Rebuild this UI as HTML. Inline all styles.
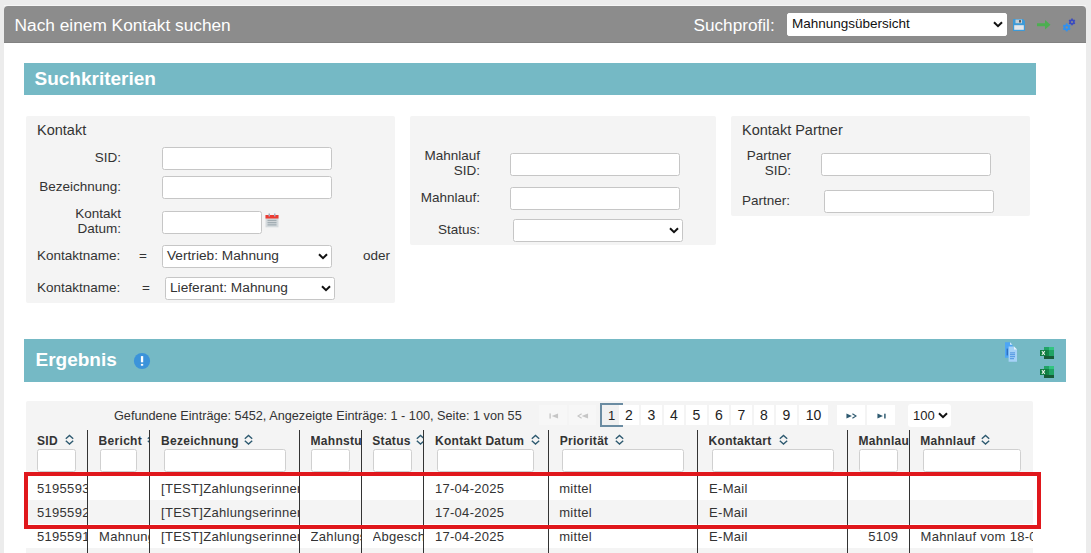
<!DOCTYPE html>
<html><head><meta charset="utf-8">
<style>
*{box-sizing:border-box;margin:0;padding:0}
html,body{width:1091px;height:553px;overflow:hidden;background:#ececec;font-family:"Liberation Sans",sans-serif;color:#333}
.a{position:absolute}
.t{position:absolute;white-space:nowrap;line-height:1}
#panel{left:4px;top:6px;width:1082px;height:560px;background:#fff;border-radius:4px 4px 0 0;overflow:hidden}
#hdr{left:0;top:0;width:1082px;height:37px;background:#8c8c8c;border-bottom:1px solid #828282}
.bar{background:#75b9c5}
.box{background:#f4f4f4;border-radius:2px}
.inp{position:absolute;background:#fff;border:1px solid #c6c6c6;border-radius:2.5px;height:23px}
.sel{position:absolute;background:#fff;border:1px solid #c6c6c6;border-radius:2.5px;height:23px}
.sel svg{position:absolute;right:3px;top:7px}
.lbl{position:absolute;white-space:nowrap;font-size:13.5px;line-height:15px;color:#333}
.r{text-align:right}
.th{position:absolute;white-space:nowrap;font-size:12px;font-weight:700;line-height:1;color:#333;letter-spacing:0.3px}
.cl{position:absolute;width:1px;background:#333}
.td{position:absolute;white-space:nowrap;font-size:13px;line-height:1;color:#333;letter-spacing:0.3px}
.pg{position:absolute;top:405px;height:20px;background:#fff;font-size:14px;line-height:20px;text-align:center;color:#222}
</style></head><body>
<div class="a" style="left:4px;top:5px;width:1082px;height:1px;background:#f6f6f6"></div>
<div id="panel" class="a">
  <div id="hdr" class="a"></div>
</div>
<!-- header text -->
<div class="t" style="left:14.6px;top:17px;font-size:17.3px;color:#fff">Nach einem Kontakt suchen</div>
<div class="t" style="left:693.5px;top:16.8px;font-size:17.2px;color:#fff">Suchprofil:</div>
<div class="sel" style="left:787px;top:13px;width:220px;height:22.5px;border-color:#fff;border-radius:2px">
  <div class="t" style="left:4px;top:3.4px;font-size:13.5px;color:#111">Mahnungsübersicht</div>
  <svg width="10" height="7" viewBox="0 0 10 7" style="top:7px;right:3px"><path d="M1 1.2 L5 5.2 L9 1.2" fill="none" stroke="#111" stroke-width="2"/></svg>
</div>

<!-- Suchkriterien -->
<div class="a bar" style="left:24px;top:63px;width:1012px;height:32px"></div>
<div class="t" style="left:34.5px;top:68.5px;font-size:19px;font-weight:700;color:#fff">Suchkriterien</div>

<!-- Kontakt box -->
<div class="a box" style="left:26px;top:116px;width:369px;height:187px"></div>
<div class="t" style="left:37px;top:123px;font-size:14.5px;color:#333">Kontakt</div>
<div class="lbl r" style="left:30px;top:150px;width:91px">SID:</div>
<div class="inp" style="left:162px;top:147px;width:170px"></div>
<div class="lbl r" style="left:30px;top:179px;width:91px">Bezeichnung:</div>
<div class="inp" style="left:162px;top:176px;width:170px"></div>
<div class="lbl r" style="left:30px;top:206px;width:91px">Kontakt<br>Datum:</div>
<div class="inp" style="left:162px;top:211px;width:100px"></div>

<div class="lbl" style="left:37px;top:248px">Kontaktname:</div>
<div class="lbl" style="left:139px;top:248px">=</div>
<div class="sel" style="left:162px;top:245px;width:170px;height:23px">
  <div class="t" style="left:4px;top:3.3px;font-size:13.7px">Vertrieb: Mahnung</div>
  <svg width="10" height="7" viewBox="0 0 10 7"><path d="M1 1.2 L5 5.2 L9 1.2" fill="none" stroke="#111" stroke-width="2"/></svg>
</div>
<div class="lbl" style="left:363px;top:248px">oder</div>
<div class="lbl" style="left:37px;top:280px">Kontaktname:</div>
<div class="lbl" style="left:142px;top:280px">=</div>
<div class="sel" style="left:165px;top:277px;width:170px;height:23px">
  <div class="t" style="left:4px;top:3.3px;font-size:13.7px">Lieferant: Mahnung</div>
  <svg width="10" height="7" viewBox="0 0 10 7"><path d="M1 1.2 L5 5.2 L9 1.2" fill="none" stroke="#111" stroke-width="2"/></svg>
</div>

<!-- Mahnlauf box -->
<div class="a box" style="left:410px;top:116px;width:306px;height:129px"></div>
<div class="lbl r" style="left:400px;top:148px;width:80px">Mahnlauf<br>SID:</div>
<div class="inp" style="left:510px;top:153px;width:170px"></div>
<div class="lbl r" style="left:400px;top:190px;width:80px">Mahnlauf:</div>
<div class="inp" style="left:510px;top:187px;width:170px"></div>
<div class="lbl r" style="left:400px;top:222px;width:80px">Status:</div>
<div class="sel" style="left:513px;top:219px;width:170px">
  <svg width="10" height="7" viewBox="0 0 10 7"><path d="M1 1.2 L5 5.2 L9 1.2" fill="none" stroke="#111" stroke-width="2"/></svg>
</div>

<!-- Partner box -->
<div class="a box" style="left:731px;top:116px;width:299px;height:100px"></div>
<div class="t" style="left:742px;top:123px;font-size:14.5px;color:#333">Kontakt Partner</div>
<div class="lbl r" style="left:700px;top:148px;width:91px">Partner<br>SID:</div>
<div class="inp" style="left:821px;top:153px;width:170px"></div>
<div class="lbl" style="left:742px;top:193px">Partner:</div>
<div class="inp" style="left:824px;top:190px;width:170px"></div>

<!-- Ergebnis -->
<div class="a bar" style="left:24px;top:339px;width:1042px;height:43px"></div>
<div class="t" style="left:35.5px;top:350.4px;font-size:19px;font-weight:700;color:#fff">Ergebnis</div>

<!-- table bg -->
<div class="a box" style="left:26px;top:401px;width:1007px;height:160px"></div>
<div class="t" style="left:114px;top:410px;font-size:12.7px;color:#333">Gefundene Einträge: 5452, Angezeigte Einträge: 1 - 100, Seite: 1 von 55</div>

<div class="a" style="left:37.0px;top:430px;width:50.0px;height:19px;overflow:hidden"><div class="th" style="left:0;top:5px">SID</div><svg class="a" style="left:28.4px;top:4.3px" width="9" height="11" viewBox="0 0 9 11"><path d="M0.8 4.7 L4.5 1.5 L8.2 4.7 M0.8 6.8 L4.5 10 L8.2 6.8" fill="none" stroke="#2e5a70" stroke-width="1.4"/></svg></div>
<div class="a" style="left:98.6px;top:430px;width:50.4px;height:19px;overflow:hidden"><div class="th" style="left:0;top:5px">Bericht</div><svg class="a" style="left:48.0px;top:4.3px" width="9" height="11" viewBox="0 0 9 11"><path d="M0.8 4.7 L4.5 1.5 L8.2 4.7 M0.8 6.8 L4.5 10 L8.2 6.8" fill="none" stroke="#2e5a70" stroke-width="1.4"/></svg></div>
<div class="a" style="left:161.0px;top:430px;width:138.0px;height:19px;overflow:hidden"><div class="th" style="left:0;top:5px">Bezeichnung</div><svg class="a" style="left:82.9px;top:4.3px" width="9" height="11" viewBox="0 0 9 11"><path d="M0.8 4.7 L4.5 1.5 L8.2 4.7 M0.8 6.8 L4.5 10 L8.2 6.8" fill="none" stroke="#2e5a70" stroke-width="1.4"/></svg></div>
<div class="a" style="left:310.5px;top:430px;width:50.5px;height:19px;overflow:hidden"><div class="th" style="left:0;top:5px">Mahnstufe</div></div>
<div class="a" style="left:372.3px;top:430px;width:50.7px;height:19px;overflow:hidden"><div class="th" style="left:0;top:5px">Status</div><svg class="a" style="left:44.1px;top:4.3px" width="9" height="11" viewBox="0 0 9 11"><path d="M0.8 4.7 L4.5 1.5 L8.2 4.7 M0.8 6.8 L4.5 10 L8.2 6.8" fill="none" stroke="#2e5a70" stroke-width="1.4"/></svg></div>
<div class="a" style="left:435.0px;top:430px;width:113.0px;height:19px;overflow:hidden"><div class="th" style="left:0;top:5px">Kontakt Datum</div><svg class="a" style="left:96.4px;top:4.3px" width="9" height="11" viewBox="0 0 9 11"><path d="M0.8 4.7 L4.5 1.5 L8.2 4.7 M0.8 6.8 L4.5 10 L8.2 6.8" fill="none" stroke="#2e5a70" stroke-width="1.4"/></svg></div>
<div class="a" style="left:559.7px;top:430px;width:137.3px;height:19px;overflow:hidden"><div class="th" style="left:0;top:5px">Priorität</div><svg class="a" style="left:55.7px;top:4.3px" width="9" height="11" viewBox="0 0 9 11"><path d="M0.8 4.7 L4.5 1.5 L8.2 4.7 M0.8 6.8 L4.5 10 L8.2 6.8" fill="none" stroke="#2e5a70" stroke-width="1.4"/></svg></div>
<div class="a" style="left:708.6px;top:430px;width:138.4px;height:19px;overflow:hidden"><div class="th" style="left:0;top:5px">Kontaktart</div><svg class="a" style="left:70.8px;top:4.3px" width="9" height="11" viewBox="0 0 9 11"><path d="M0.8 4.7 L4.5 1.5 L8.2 4.7 M0.8 6.8 L4.5 10 L8.2 6.8" fill="none" stroke="#2e5a70" stroke-width="1.4"/></svg></div>
<div class="a" style="left:858.4px;top:430px;width:50.6px;height:19px;overflow:hidden"><div class="th" style="left:0;top:5px">Mahnlauf SID</div></div>
<div class="a" style="left:920.3px;top:430px;width:112.7px;height:19px;overflow:hidden"><div class="th" style="left:0;top:5px">Mahnlauf</div><svg class="a" style="left:61.1px;top:4.3px" width="9" height="11" viewBox="0 0 9 11"><path d="M0.8 4.7 L4.5 1.5 L8.2 4.7 M0.8 6.8 L4.5 10 L8.2 6.8" fill="none" stroke="#2e5a70" stroke-width="1.4"/></svg></div>
<div class="inp" style="left:37px;top:449px;width:39px;height:23px;border-color:#d0d0d0"></div>
<div class="inp" style="left:100px;top:449px;width:37px;height:23px;border-color:#d0d0d0"></div>
<div class="inp" style="left:164px;top:449px;width:122px;height:23px;border-color:#d0d0d0"></div>
<div class="inp" style="left:311px;top:449px;width:39px;height:23px;border-color:#d0d0d0"></div>
<div class="inp" style="left:373px;top:449px;width:39px;height:23px;border-color:#d0d0d0"></div>
<div class="inp" style="left:437px;top:449px;width:97px;height:23px;border-color:#d0d0d0"></div>
<div class="inp" style="left:562px;top:449px;width:122px;height:23px;border-color:#d0d0d0"></div>
<div class="inp" style="left:712px;top:449px;width:122px;height:23px;border-color:#d0d0d0"></div>
<div class="inp" style="left:859px;top:449px;width:39px;height:23px;border-color:#d0d0d0"></div>
<div class="inp" style="left:923px;top:449px;width:98px;height:23px;border-color:#d0d0d0"></div>
<div class="a" style="left:26px;top:476px;width:1007px;height:24px;background:#fff"></div>
<div class="a" style="left:26px;top:500px;width:1007px;height:24px;background:#f4f4f4"></div>
<div class="a" style="left:26px;top:524px;width:1007px;height:24px;background:#fff"></div>
<div class="a" style="left:26px;top:548px;width:1007px;height:24px;background:#f4f4f4"></div>
<div class="a" style="left:37.0px;top:476px;width:50.0px;height:24px;overflow:hidden"><div class="td" style="left:0;top:6.2px">5195593</div></div>
<div class="a" style="left:161.0px;top:476px;width:138.0px;height:24px;overflow:hidden"><div class="td" style="left:0;top:6.2px">[TEST]Zahlungserinnerung</div></div>
<div class="a" style="left:434.9px;top:476px;width:113.1px;height:24px;overflow:hidden"><div class="td" style="left:0;top:6.2px">17-04-2025</div></div>
<div class="a" style="left:559.2px;top:476px;width:137.8px;height:24px;overflow:hidden"><div class="td" style="left:0;top:6.2px">mittel</div></div>
<div class="a" style="left:709.1px;top:476px;width:137.9px;height:24px;overflow:hidden"><div class="td" style="left:0;top:6.2px">E-Mail</div></div>
<div class="a" style="left:37.0px;top:500px;width:50.0px;height:24px;overflow:hidden"><div class="td" style="left:0;top:6.2px">5195592</div></div>
<div class="a" style="left:161.0px;top:500px;width:138.0px;height:24px;overflow:hidden"><div class="td" style="left:0;top:6.2px">[TEST]Zahlungserinnerung</div></div>
<div class="a" style="left:434.9px;top:500px;width:113.1px;height:24px;overflow:hidden"><div class="td" style="left:0;top:6.2px">17-04-2025</div></div>
<div class="a" style="left:559.2px;top:500px;width:137.8px;height:24px;overflow:hidden"><div class="td" style="left:0;top:6.2px">mittel</div></div>
<div class="a" style="left:709.1px;top:500px;width:137.9px;height:24px;overflow:hidden"><div class="td" style="left:0;top:6.2px">E-Mail</div></div>
<div class="a" style="left:37.0px;top:524px;width:50.0px;height:24px;overflow:hidden"><div class="td" style="left:0;top:6.2px">5195591</div></div>
<div class="a" style="left:99.0px;top:524px;width:50.0px;height:24px;overflow:hidden"><div class="td" style="left:0;top:6.2px">Mahnung</div></div>
<div class="a" style="left:161.0px;top:524px;width:138.0px;height:24px;overflow:hidden"><div class="td" style="left:0;top:6.2px">[TEST]Zahlungserinnerung</div></div>
<div class="a" style="left:310.6px;top:524px;width:50.4px;height:24px;overflow:hidden"><div class="td" style="left:0;top:6.2px">Zahlungserinnerung</div></div>
<div class="a" style="left:372.5px;top:524px;width:50.5px;height:24px;overflow:hidden"><div class="td" style="left:0;top:6.2px">Abgeschlossen</div></div>
<div class="a" style="left:434.9px;top:524px;width:113.1px;height:24px;overflow:hidden"><div class="td" style="left:0;top:6.2px">17-04-2025</div></div>
<div class="a" style="left:559.2px;top:524px;width:137.8px;height:24px;overflow:hidden"><div class="td" style="left:0;top:6.2px">mittel</div></div>
<div class="a" style="left:709.1px;top:524px;width:137.9px;height:24px;overflow:hidden"><div class="td" style="left:0;top:6.2px">E-Mail</div></div>
<div class="a" style="left:849px;top:524px;width:49.4px;height:24px;overflow:hidden"><div class="td" style="right:0;top:6.2px">5109</div></div>
<div class="a" style="left:920.5px;top:524px;width:112.5px;height:24px;overflow:hidden"><div class="td" style="left:0;top:6.2px">Mahnlauf vom 18-04-2025</div></div>
<div class="cl" style="left:87px;top:430px;height:123px"></div>
<div class="cl" style="left:149px;top:430px;height:123px"></div>
<div class="cl" style="left:299px;top:430px;height:123px"></div>
<div class="cl" style="left:361px;top:430px;height:123px"></div>
<div class="cl" style="left:423px;top:430px;height:123px"></div>
<div class="cl" style="left:548px;top:430px;height:123px"></div>
<div class="cl" style="left:697px;top:430px;height:123px"></div>
<div class="cl" style="left:847px;top:430px;height:123px"></div>
<div class="cl" style="left:909px;top:430px;height:123px"></div>
<!-- pagination -->
<div class="a" style="left:539px;top:405px;width:28px;height:20px;background:#f7f7f7"></div>
<svg class="a" style="left:548.5px;top:412.7px" width="10" height="6" viewBox="0 0 11 7" preserveAspectRatio="none"><rect x="0.5" y="0.5" width="1.5" height="6" fill="#c6c6c6"/><path d="M3 3.5 L10 0.5 L10 6.5 Z" fill="#c6c6c6"/></svg>
<div class="a" style="left:569px;top:405px;width:27px;height:20px;background:#f7f7f7"></div>
<svg class="a" style="left:576.5px;top:412.7px" width="12" height="6" viewBox="0 0 13 7" preserveAspectRatio="none"><path d="M5 0.8 L1 3.5 L5 6.2" fill="none" stroke="#c6c6c6" stroke-width="1.3"/><path d="M5 3.5 L12 0.5 L12 6.5 Z" fill="#c6c6c6"/></svg>
<div class="a" style="left:600px;top:403px;width:23px;height:24px;border:2.5px solid #6b8ca2;border-right:none;background:#f1f1f1"></div>
<div class="pg" style="left:619px;width:20px">2</div>
<div class="pg" style="left:641px;width:21px">3</div>
<div class="pg" style="left:664px;width:20px">4</div>
<div class="pg" style="left:686px;width:21px">5</div>
<div class="pg" style="left:709px;width:20px">6</div>
<div class="pg" style="left:731px;width:21px">7</div>
<div class="pg" style="left:754px;width:20px">8</div>
<div class="pg" style="left:776px;width:21px">9</div>
<div class="pg" style="left:799px;width:29px">10</div>
<div class="t" style="left:608px;top:409px;font-size:13px;color:#222">1</div>
<div class="pg" style="left:837px;width:28px"></div>
<svg class="a" style="left:846px;top:412.7px" width="11" height="6" viewBox="0 0 12 7" preserveAspectRatio="none"><path d="M0.5 0.5 L6.5 3.5 L0.5 6.5 Z" fill="#2e5a70"/><path d="M7 0.8 L11 3.5 L7 6.2" fill="none" stroke="#2e5a70" stroke-width="1.3"/></svg>
<div class="pg" style="left:867px;width:28px"></div>
<svg class="a" style="left:877px;top:412.7px" width="9.2" height="6" viewBox="0 0 10 7" preserveAspectRatio="none"><path d="M0.5 0.5 L6.5 3.5 L0.5 6.5 Z" fill="#2e5a70"/><rect x="7.8" y="0.8" width="1.6" height="5.6" fill="#2e5a70"/></svg>
<div class="a" style="left:908px;top:404px;width:43px;height:23px;background:#fff;border-radius:3px"></div>
<div class="t" style="left:913px;top:409px;font-size:13px;color:#222">100</div>
<svg class="a" style="left:938px;top:412px" width="10" height="7" viewBox="0 0 10 7"><path d="M1 1.2 L5 5.2 L9 1.2" fill="none" stroke="#111" stroke-width="2"/></svg>

<!-- red box -->
<div class="a" style="left:24px;top:472px;width:1017px;height:57px;border:4px solid #e0171c"></div>

<!-- info icon -->
<svg class="a" style="left:133px;top:352px" width="18" height="18" viewBox="0 0 18 18"><circle cx="9" cy="9" r="8.1" fill="#3b93da"/><rect x="7.9" y="4.1" width="2.3" height="6.2" fill="#fff"/><rect x="7.9" y="11.9" width="2.3" height="1.8" fill="#fff"/></svg>

<!-- calendar icon -->
<svg class="a" style="left:265px;top:213px" width="14" height="15" viewBox="0 0 14 15"><rect x="0.5" y="2" width="13" height="12.3" fill="#d5dadd"/><rect x="0.5" y="2" width="13" height="3.5" fill="#ec3b32"/><rect x="3.5" y="0.5" width="1.5" height="3" fill="#aab"/><rect x="9" y="0.5" width="1.5" height="3" fill="#aab"/><rect x="2.5" y="6.8" width="9" height="1.3" fill="#a2adb3"/><rect x="2.5" y="9" width="9" height="1.3" fill="#a2adb3"/><rect x="2.5" y="11.2" width="9" height="1.3" fill="#a2adb3"/></svg>

<!-- header icons -->
<svg class="a" style="left:1013px;top:19px" width="12" height="12" viewBox="0 0 12 12"><path d="M0 0 H10 L12 2 V12 H0 Z" fill="#3d9ad8"/><rect x="2.5" y="0.6" width="6.5" height="3.6" fill="#c5cfd6"/><rect x="6.3" y="1.1" width="1.4" height="2.4" fill="#2a2a2a"/><rect x="1.2" y="6.2" width="9.6" height="4.6" fill="#e4e7ea"/></svg>
<svg class="a" style="left:1037px;top:20px" width="14" height="10" viewBox="0 0 14 10"><path d="M0 3.3 H8 V0 L13.5 4.8 L8 9.6 V6.3 H0 Z" fill="#4cae50"/></svg>
<svg class="a" style="left:1061px;top:17px" width="16" height="16" viewBox="0 0 16 16"><g transform="translate(11 4.9)" fill="#3b4cc0"><circle r="2.6"/><rect x="-0.8" y="-3.4" width="1.6" height="6.8" transform="rotate(0)"/><rect x="-0.8" y="-3.4" width="1.6" height="6.8" transform="rotate(60)"/><rect x="-0.8" y="-3.4" width="1.6" height="6.8" transform="rotate(120)"/></g><circle cx="11" cy="4.9" r="1.0" fill="#8c8c8c"/><g transform="translate(5.7 10.4)" fill="#2e91f2"><circle r="3.0"/><rect x="-0.9" y="-4.0" width="1.8" height="8.0" transform="rotate(0)"/><rect x="-0.9" y="-4.0" width="1.8" height="8.0" transform="rotate(60)"/><rect x="-0.9" y="-4.0" width="1.8" height="8.0" transform="rotate(120)"/></g><circle cx="5.7" cy="10.4" r="1.2" fill="#8c8c8c"/></svg>

<!-- ergebnis icons -->
<svg class="a" style="left:1004px;top:341px" width="14" height="22" viewBox="0 0 14 22"><path d="M1 1.3 H6 L8.5 3.8 V16.7 H1 Z" fill="#4da6f5"/><path d="M6 1.3 L8.5 3.8 H6 Z" fill="#d6ebfb"/><rect x="2.6" y="7.6" width="1.4" height="6.8" fill="#2f6fc0"/><path d="M4.6 5.4 H10 L13 8.4 V20.8 H4.6 Z" fill="#a6d2f7"/><path d="M10 5.4 L13 8.4 H10 Z" fill="#e6f3fd"/><rect x="6" y="11.4" width="5" height="1" fill="#4b92e0"/><rect x="6" y="13.2" width="5" height="1" fill="#4b92e0"/><rect x="6" y="15.2" width="5" height="1" fill="#4b92e0"/><rect x="6" y="17.2" width="4" height="1" fill="#4b92e0"/></svg>
<svg class="a" style="left:1040px;top:347px" width="14" height="12" viewBox="0 0 14 12"><rect x="4" y="0" width="10" height="12" fill="#21a366"/><rect x="9" y="0" width="5" height="3" fill="#33c481"/><rect x="4" y="3" width="5" height="6" fill="#138448"/><rect x="4" y="9" width="10" height="3" fill="#185c37"/><rect x="0" y="3" width="6.7" height="6" fill="#107c41"/><path d="M1.9 4.2 L4.8 7.8 M4.8 4.2 L1.9 7.8" stroke="#e8f2ea" stroke-width="1.1"/></svg>
<svg class="a" style="left:1040px;top:366px" width="14" height="12" viewBox="0 0 14 12"><rect x="4" y="0" width="10" height="12" fill="#21a366"/><rect x="9" y="0" width="5" height="3" fill="#33c481"/><rect x="4" y="3" width="5" height="6" fill="#138448"/><rect x="4" y="9" width="10" height="3" fill="#185c37"/><rect x="0" y="3" width="6.7" height="6" fill="#107c41"/><path d="M1.9 4.2 L4.8 7.8 M4.8 4.2 L1.9 7.8" stroke="#e8f2ea" stroke-width="1.1"/></svg>

</body></html>
